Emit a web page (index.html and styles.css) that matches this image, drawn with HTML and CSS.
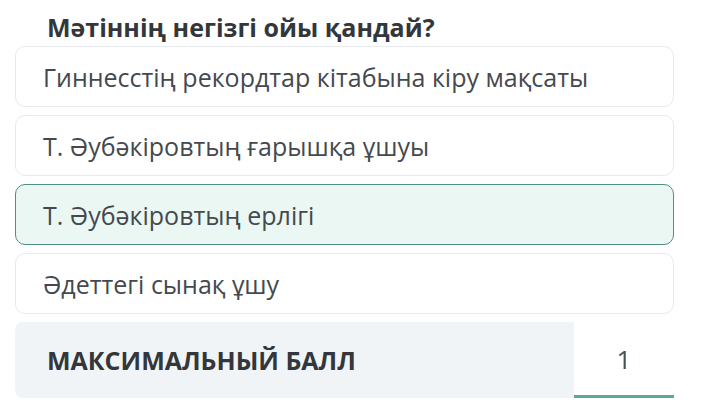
FILE: index.html
```html
<!DOCTYPE html>
<html lang="kk">
<head>
	<meta charset="UTF-8">
	<meta name="viewport" content="width=device-width, initial-scale=1.0">
	<title>Сұрақ</title>
	<link rel="stylesheet" href="styles.css">
</head>
<body>

	<main class="quiz">
		<h2 class="question">Мәтіннің негізгі ойы қандай?</h2>
		<div class="options">
			<div class="option">Гиннесстің рекордтар кітабына кіру мақсаты</div>
			<div class="option">Т. Әубәкіровтың ғарышқа ұшуы</div>
			<div class="option selected">Т. Әубәкіровтың ерлігі</div>
			<div class="option">Әдеттегі сынақ ұшу</div>
		</div>
		<div class="score">
			<div class="scoreLabel">МАКСИМАЛЬНЫЙ БАЛЛ</div>
			<div class="scoreValue">1</div>
		</div>
	</main>

</body>
</html>
```

FILE: styles.css
```css
body{
	margin: 0;
	padding: 0;
	background: #ffffff;
	font-family: "Open Sans", "Liberation Sans", sans-serif;
	color: #3b3f44;
}

.quiz{
	width: 659px;
	padding: 0 0 0 15px;
	display: flex;
	flex-direction: column;
}

.question{
	margin: 0;
	padding: 12px 0 0 32px;
	height: 34px;
	font-size: 25px;
	font-weight: 700;
	line-height: 30px;
	color: #33373b;
}

.options{
	display: flex;
	flex-direction: column;
	gap: 8px;
}

.option{
	height: 59px;
	border: 1px solid #e6eaec;
	border-radius: 10px;
	background: #ffffff;
	display: flex;
	align-items: center;
	padding-left: 27px;
	font-size: 25px;
	color: #45494e;
}

.selected{
	background: #eaf7f3;
	border-color: #4f8f86;
}

.score{
	margin-top: 8px;
	height: 76px;
	display: flex;
}

.scoreLabel{
	flex: 1;
	background: #f1f4f6;
	border-radius: 8px 0 0 8px;
	display: flex;
	align-items: center;
	padding-left: 32px;
	font-size: 25px;
	font-weight: 700;
	color: #33373b;
}

.scoreValue{
	width: 100px;
	display: flex;
	align-items: center;
	justify-content: center;
	border-bottom: 3px solid #5aa6a0;
	font-size: 26px;
	color: #4a4e52;
}
```
